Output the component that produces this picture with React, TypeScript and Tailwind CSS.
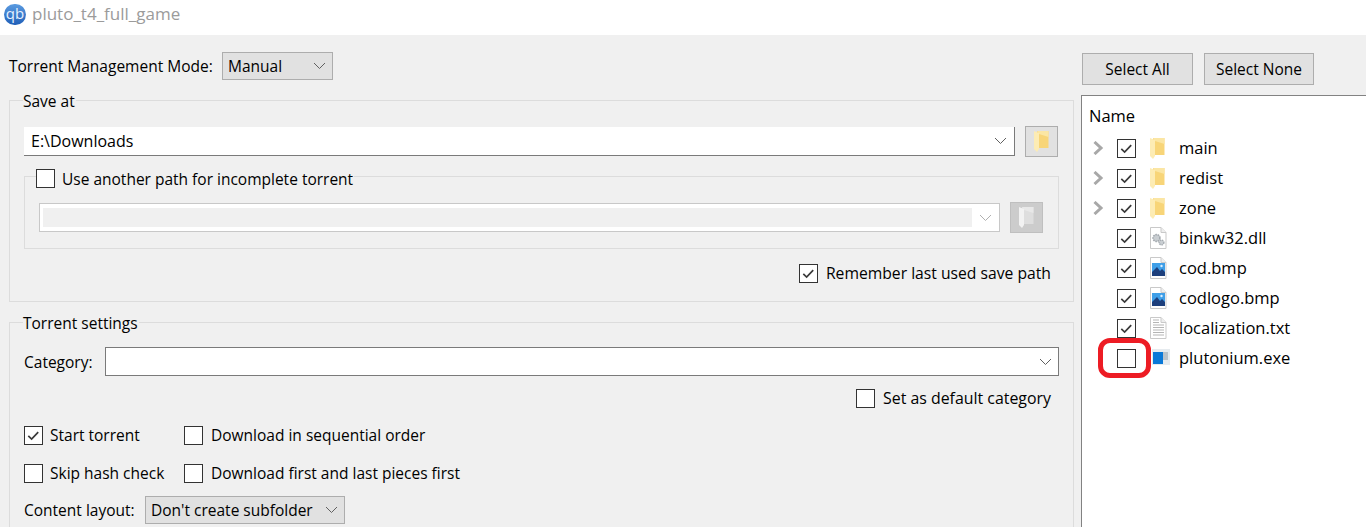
import React from 'react';

const Check = () => (
  <svg viewBox="0 0 18 18" className="w-full h-full">
    <path d="M3.5 9.5 L7 12.8 L14 5.5" fill="none" stroke="#3a3a3a" strokeWidth="1.8" />
  </svg>
);

const Checkbox = ({ checked = false }: { checked?: boolean }) => (
  <span className="w-[19px] h-[19px] shrink-0 bg-white border border-[#333] block">
    {checked && <Check />}
  </span>
);

const Chevron = ({ color = '#606060' }: { color?: string }) => (
  <svg width="13" height="8" viewBox="0 0 13 8" className="shrink-0">
    <path d="M1 1 L6.5 6.5 L12 1" fill="none" stroke={color} strokeWidth="1" />
  </svg>
);

const Folder = ({ disabled = false }: { disabled?: boolean }) => (
  <svg width="15" height="21" viewBox="0 0 15 21" className="shrink-0">
    <path d="M3 0 H14.5 V17 H3 Z" fill={disabled ? '#dedede' : '#f8d578'} />
    <path d="M3 0 H14.5 V6 L5 3 Z" fill={disabled ? '#e8e8e8' : '#fbe6a4'} />
    <path d="M0 0 L5 2 V18 L3 21 L0 18 Z" fill={disabled ? '#f2f2f2' : '#fdecb4'} />
  </svg>
);

const Group = ({ title, className = '', children }: { title: React.ReactNode; className?: string; children: React.ReactNode }) => (
  <fieldset className={`border border-[#dcdcdc] ${className}`}>
    <legend className="ml-[13px] pr-[1px] leading-[24px] h-[22px]">{title}</legend>
    {children}
  </fieldset>
);

const FileRow = ({ expandable, checked = true, icon, name }: { expandable?: boolean; checked?: boolean; icon: React.ReactNode; name: string }) => (
  <div className="flex items-center h-[30px] pl-[11px]">
    <span className="w-[24px] shrink-0 flex">
      {expandable && (
        <svg width="11" height="14" viewBox="0 0 11 14">
          <path d="M1.5 1 L8 7 L1.5 13" fill="none" stroke="#a8a8a8" strokeWidth="3" />
        </svg>
      )}
    </span>
    <Checkbox checked={checked} />
    <span className="w-[14px] shrink-0" />
    <span className="w-[29px] shrink-0 flex">{icon}</span>
    <span className="-mt-[1px]">{name}</span>
  </div>
);

const DocBase = ({ children }: { children: React.ReactNode }) => (
  <svg width="17" height="22" viewBox="0 0 17 22">
    <path d="M0.5 0.5 H11 L16 5.5 V21.5 H0.5 Z" fill="#fff" stroke="#c9c9c9" />
    <path d="M11 0.5 V5.5 H16" fill="#eee" stroke="#c9c9c9" />
    {children}
  </svg>
);

const DllIcon = () => (
  <DocBase>
    <circle cx="6.5" cy="11" r="3.4" fill="#c9ced2" stroke="#a3a9ae" strokeWidth="1.6" strokeDasharray="1.6 0.8" />
    <circle cx="11.5" cy="15.5" r="2.4" fill="#c9ced2" stroke="#a3a9ae" strokeWidth="1.4" strokeDasharray="1.4 0.7" />
  </DocBase>
);

const BmpIcon = () => (
  <DocBase>
    <rect x="2" y="6" width="13" height="13" fill="#3f9fe8" />
    <circle cx="11.5" cy="9" r="1.2" fill="#dff1ff" />
    <path d="M2 19 V15 L7 10 L10 14 L12 12 L15 15 V19 Z" fill="#1d3f7c" />
  </DocBase>
);

const TxtIcon = () => (
  <DocBase>
    <path d="M3 3 H9 M3 5.5 H9 M3 8 H14 M3 10.5 H14 M3 13 H14 M3 15.5 H14 M3 18 H14" stroke="#b5b5b5" strokeWidth="1" />
  </DocBase>
);

const ExeIcon = () => (
  <svg width="18" height="16" viewBox="0 0 18 16" className="ml-[2px] -mt-[2px]">
    <rect x="0" y="0" width="18" height="16" fill="#e6ebef" />
    <rect x="1" y="3" width="10" height="12" fill="#0a78d7" />
    <rect x="11" y="3" width="5" height="8" fill="#b9c2c9" />
  </svg>
);

const Combo = ({ value, className = '' }: { value: string; className?: string }) => (
  <div className={`h-[28px] bg-[#e1e1e1] border border-[#adadad] flex items-center justify-between pl-[5px] pr-[6px] ${className}`}>
    <span>{value}</span>
    <Chevron />
  </div>
);

const Labeled = ({ checked, label, className = '' }: { checked?: boolean; label: string; className?: string }) => (
  <div className={`flex items-center ${className}`}>
    <Checkbox checked={checked} />
    <span>{label}</span>
  </div>
);

const ToolButton = ({ children, className = '' }: { children: React.ReactNode; className?: string }) => (
  <div className={`w-[33px] h-[31px] shrink-0 border flex items-center justify-center ${className}`}>{children}</div>
);

export default function App() {
  return (
    <div className="w-[1366px] h-[527px] overflow-hidden bg-[#f0f0f0] text-[15.5px] leading-[20px] text-black" style={{ fontFamily: '"Open Sans", "Noto Sans", sans-serif' }}>
      <div className="h-[35px] bg-white flex items-center pl-[4px] gap-[6px]">
        <div className="w-[22px] h-[21px] rounded-full bg-gradient-to-b from-[#5b9be0] to-[#1f5fb8] text-[#e6f1ff] text-[15px] leading-[19px] text-center -mt-[6px]">qb</div>
        <span className="text-[#9b9b9b] -mt-[7px] text-[17px]">pluto_t4_full_game</span>
      </div>

      <div className="flex">
        <div className="w-[1074px] pl-[9px] shrink-0">
          <div className="flex items-center h-[28px] mt-[17px]">
            <span className="w-[213px]">Torrent Management Mode:</span>
            <Combo value="Manual" className="w-[111px]" />
          </div>

          <Group title="Save at" className="mt-[9px] h-[213px] w-[1065px]">
            <div className="flex items-center pl-[14px] pr-[14px] mt-[15px]">
              <div className="h-[29px] w-[991px] bg-white border-r border-b border-[#7a7a7a] flex items-center justify-between pl-[7px] pr-[7px] text-[16px]">
                <span>E:\Downloads</span>
                <Chevron />
              </div>
              <ToolButton className="ml-[10px] bg-[#e1e1e1] border-[#adadad]">
                <Folder />
              </ToolButton>
            </div>

            <Group
              title={
                <span className="flex items-center gap-[7px] -ml-[2px]">
                  <Checkbox />
                  <span className="mt-[2px]">Use another path for incomplete torrent</span>
                </span>
              }
              className="ml-[14px] mt-[8px] w-[1035px] h-[84px]"
            >
              <div className="flex items-center pl-[14px] mt-[15px]">
                <div className="h-[29px] w-[961px] bg-white border border-[#c8c8c8] flex items-center pl-[3px] pr-[7px]">
                  <div className="w-[929px] h-[19px] bg-[#f0f0f0]" />
                  <span className="ml-auto flex"><Chevron color="#b0b0b0" /></span>
                </div>
                <ToolButton className="ml-[10px] bg-[#cccccc] border-[#bfbfbf]">
                  <Folder disabled />
                </ToolButton>
              </div>
            </Group>

            <div className="flex justify-end pr-[22px] mt-[14px] text-[15.7px]">
              <Labeled checked label="Remember last used save path" className="gap-[8px]" />
            </div>
          </Group>

          <Group title="Torrent settings" className="mt-[9px] w-[1065px] h-[260px]">
            <div className="flex items-center pl-[14px] mt-[14px]">
              <span className="w-[81px]">Category:</span>
              <div className="h-[29px] w-[954px] bg-white border border-[#7a7a7a] flex items-center justify-end pr-[6px]">
                <Chevron />
              </div>
            </div>
            <div className="flex justify-end pr-[22px] mt-[12px] text-[15.9px]">
              <Labeled label="Set as default category" className="gap-[8px]" />
            </div>
            <div className="grid grid-cols-[160px_1fr] gap-y-[18px] pl-[14px] mt-[17px]">
              <Labeled checked label="Start torrent" className="gap-[7px]" />
              <Labeled label="Download in sequential order" className="gap-[8px]" />
              <Labeled label="Skip hash check" className="gap-[7px]" />
              <Labeled label="Download first and last pieces first" className="gap-[8px]" />
            </div>
            <div className="flex items-center pl-[14px] mt-[13px]">
              <span className="w-[121px]">Content layout:</span>
              <Combo value="Don't create subfolder" className="w-[200px]" />
            </div>
          </Group>
        </div>

        <div className="flex-1 pl-[7px] relative">
          <div className="flex gap-[11px] mt-[18px] ml-[1px]">
            <div className="w-[111px] h-[32px] bg-[#e1e1e1] border border-[#adadad] flex items-center justify-center">Select All</div>
            <div className="w-[110px] h-[32px] bg-[#e1e1e1] border border-[#adadad] flex items-center justify-center">Select None</div>
          </div>
          <div className="mt-[10px] h-[440px] bg-white border-l border-t border-[#828282] relative text-[16.5px]">
            <div className="pl-[7px] pt-[10px] h-[37px]">Name</div>
            <div>
              <FileRow expandable icon={<Folder />} name="main" />
              <FileRow expandable icon={<Folder />} name="redist" />
              <FileRow expandable icon={<Folder />} name="zone" />
              <FileRow icon={<DllIcon />} name="binkw32.dll" />
              <FileRow icon={<BmpIcon />} name="cod.bmp" />
              <FileRow icon={<BmpIcon />} name="codlogo.bmp" />
              <FileRow icon={<TxtIcon />} name="localization.txt" />
              <FileRow checked={false} icon={<ExeIcon />} name="plutonium.exe" />
            </div>
            <div className="absolute left-[16px] top-[242px] w-[53px] h-[40px] border-[5px] border-[#ed1c24] rounded-[12px]" />
          </div>
        </div>
      </div>
    </div>
  );
}
